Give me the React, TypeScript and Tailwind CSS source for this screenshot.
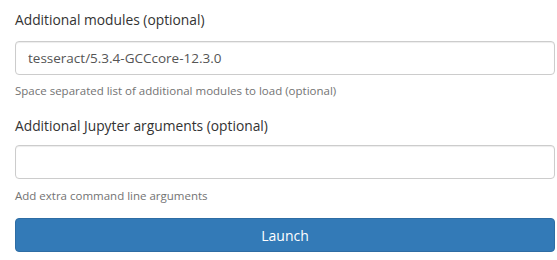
import React from 'react';

const fieldClass =
  'block w-full h-[34px] rounded-[4px] border border-[#ccc] bg-white px-3 text-[13.5px] text-[#555] shadow-[inset_0_1px_1px_rgba(0,0,0,0.075)] focus:outline-none';

export default function App() {
  const [modules, setModules] = React.useState('tesseract/5.3.4-GCCcore-12.3.0');
  const [args, setArgs] = React.useState('');

  return (
    <div className="bg-white pl-[15px] pr-[2px] pt-[10px] text-[#333]" style={{ fontFamily: '"Open Sans", "Noto Sans", sans-serif' }}>
      <div className="mb-[17px]">
        <label className="block text-[13.8px] leading-[20px] mb-[11px]">Additional modules (optional)</label>
        <input type="text" value={modules} onChange={e => setModules(e.target.value)} className={fieldClass} />
        <p className="mt-[7px] text-[11.5px] leading-[17px] text-[#737373]">
          Space separated list of additional modules to load (optional)
        </p>
      </div>

      <div className="mb-[14px]">
        <label className="block text-[13.8px] leading-[20px] mb-[9px]">Additional Jupyter arguments (optional)</label>
        <input type="text" value={args} onChange={e => setArgs(e.target.value)} className={fieldClass} />
        <p className="mt-[8px] text-[11.5px] leading-[17px] text-[#737373]">Add extra command line arguments</p>
      </div>

      <button
        type="button"
        className="block w-full h-[34px] rounded-[4px] border border-[#2e6da4] bg-[#337ab7] text-[14px] text-white"
      >
        Launch
      </button>
    </div>
  );
}
